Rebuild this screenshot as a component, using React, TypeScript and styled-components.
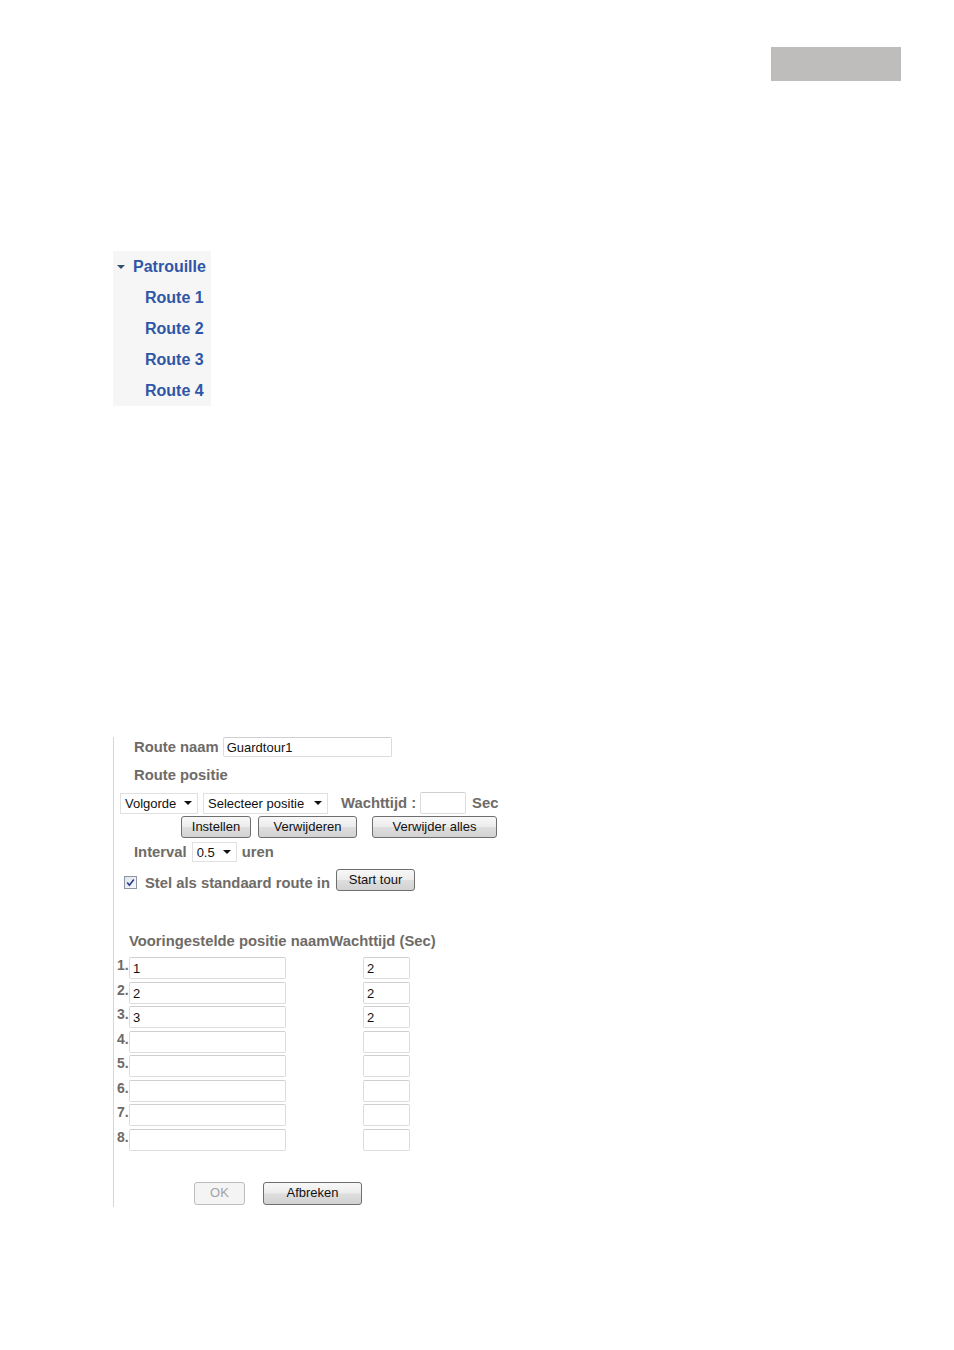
import React from 'react'
import styled, { createGlobalStyle } from 'styled-components'

const GlobalStyle = createGlobalStyle`
  body {
    margin: 0;
    background: #ffffff;
    font-family: "Liberation Sans", Arial, sans-serif;
  }
`

const Page = styled.div`
  width: 954px;
  padding-top: 47px;
`

const TopBar = styled.div`
  display: flex;
  justify-content: flex-end;
  padding-right: 53px;
`

const GrayBlock = styled.div`
  width: 130px;
  height: 34px;
  background: #bfbdbb;
`

const Tree = styled.div`
  margin: 170px 0 0 113px;
  width: 98px;
  background: #f6f6f6;
`

const TreeRow = styled.div<{ indent: number }>`
  height: 31px;
  display: flex;
  align-items: center;
  padding-left: ${p => p.indent}px;
  font-size: 16px;
  font-weight: bold;
  color: #2f56a6;
`

const Caret = styled.span<{ color?: string; size?: number }>`
  display: inline-block;
  width: 0;
  height: 0;
  border-left: ${p => p.size ?? 4}px solid transparent;
  border-right: ${p => p.size ?? 4}px solid transparent;
  border-top: ${p => p.size ?? 4}px solid ${p => p.color ?? '#111'};
`

const TreeCaret = styled(Caret)`
  margin-right: 8px;
`

const Form = styled.div`
  margin: 331px 0 0 113px;
  width: 420px;
  border-left: 1px solid #d6d6d6;
  padding-bottom: 2px;
`

const Row = styled.div<{ pad: number; mt?: number; h: number }>`
  display: flex;
  align-items: center;
  padding-left: ${p => p.pad}px;
  margin-top: ${p => p.mt ?? 0}px;
  height: ${p => p.h}px;
`

const Label = styled.span<{ ml?: number; mr?: number; low?: boolean }>`
  font-size: 14.8px;
  font-weight: bold;
  color: #6e6b68;
  white-space: nowrap;
  margin: ${p => (p.low ? 5 : 0)}px ${p => p.mr ?? 0}px 0 ${p => p.ml ?? 0}px;
`

const TextBox = styled.input<{ w: number; h?: number }>`
  box-sizing: border-box;
  width: ${p => p.w}px;
  height: ${p => p.h ?? 22}px;
  margin: 0;
  padding: 1px 3px 0;
  border: 1px solid #dcdcdc;
  border-top-color: #cfcfcf;
  border-radius: 2px;
  background: #fff;
  font-family: "Liberation Sans", Arial, sans-serif;
  font-size: 13px;
  color: #111;
  outline: none;
`

const FakeSelect = styled.div<{ w: number; h?: number; ml?: number }>`
  box-sizing: border-box;
  width: ${p => p.w}px;
  height: ${p => p.h ?? 21}px;
  margin-left: ${p => p.ml ?? 0}px;
  display: inline-flex;
  align-items: center;
  justify-content: space-between;
  padding: 0 5px 0 4px;
  border: 1px solid #e0e0e0;
  background: #fff;
  font-size: 13px;
  color: #111;
  white-space: nowrap;
`

const Button = styled.button<{ w: number; h?: number; ml?: number; disabled?: boolean }>`
  box-sizing: border-box;
  width: ${p => p.w}px;
  height: ${p => p.h ?? 22}px;
  margin: 0 0 0 ${p => p.ml ?? 0}px;
  padding: 0 0 1px;
  border: 1px solid ${p => (p.disabled ? '#bdbdbd' : '#6f6f6f')};
  border-radius: 3px;
  background: ${p =>
    p.disabled
      ? '#f4f4f4'
      : 'linear-gradient(#f8f8f8 0%, #ececec 48%, #dedede 52%, #d2d2d2 100%)'};
  font-family: "Liberation Sans", Arial, sans-serif;
  font-size: 13px;
  color: ${p => (p.disabled ? '#a3a3a3' : '#111')};
  line-height: 1;
`

const Check = styled.svg`
  flex: none;
  margin: 5px 8px 0 0;
`

const TableRow = styled.div`
  display: flex;
  align-items: flex-start;
  height: 22px;
  margin-bottom: 2.5px;
  padding-left: 3px;
`

const Num = styled.span`
  width: 12px;
  font-size: 14px;
  font-weight: bold;
  line-height: 16px;
  color: #6e6b68;
`

const Spacer = styled.div<{ w: number }>`
  width: ${p => p.w}px;
  flex: none;
`

const TableBlock = styled.div`
  margin-top: 7px;
`

const rows = [
  { name: '1', wait: '2' },
  { name: '2', wait: '2' },
  { name: '3', wait: '2' },
  { name: '', wait: '' },
  { name: '', wait: '' },
  { name: '', wait: '' },
  { name: '', wait: '' },
  { name: '', wait: '' },
]

export default function App() {
  return (
    <Page>
      <GlobalStyle />
      <TopBar>
        <GrayBlock />
      </TopBar>

      <Tree>
        <TreeRow indent={4}>
          <TreeCaret color="#34506f" />
          Patrouille
        </TreeRow>
        {[1, 2, 3, 4].map(n => (
          <TreeRow key={n} indent={32}>
            Route {n}
          </TreeRow>
        ))}
      </Tree>

      <Form>
        <Row pad={20} h={20}>
          <Label mr={4}>Route naam</Label>
          <TextBox w={169} h={20} value="Guardtour1" readOnly />
        </Row>
        <Row pad={20} mt={8} h={20}>
          <Label>Route positie</Label>
        </Row>
        <Row pad={6} mt={7} h={22}>
          <FakeSelect w={78}>
            Volgorde <Caret />
          </FakeSelect>
          <FakeSelect w={125} ml={5}>
            Selecteer positie <Caret />
          </FakeSelect>
          <Label ml={13} mr={4}>Wachttijd :</Label>
          <TextBox w={46} value="" readOnly />
          <Label ml={6}>Sec</Label>
        </Row>
        <Row pad={67} mt={2} h={22}>
          <Button w={70}>Instellen</Button>
          <Button w={99} ml={7}>Verwijderen</Button>
          <Button w={125} ml={15}>Verwijder alles</Button>
        </Row>
        <Row pad={20} mt={4} h={20}>
          <Label mr={5}>Interval</Label>
          <FakeSelect w={45} h={20}>
            0.5 <Caret />
          </FakeSelect>
          <Label ml={5}>uren</Label>
        </Row>
        <Row pad={10} mt={7} h={22}>
          <Check width="13" height="13" viewBox="0 0 13 13">
            <defs>
              <linearGradient id="cb" x1="0" y1="0" x2="1" y2="1">
                <stop offset="0" stopColor="#dfe3ea" />
                <stop offset="1" stopColor="#f8f9fb" />
              </linearGradient>
            </defs>
            <rect x="0.5" y="0.5" width="12" height="12" fill="url(#cb)" stroke="#8c97a6" />
            <path d="M3.2 6.6 L5.4 9.2 L9.8 3.4" fill="none" stroke="#2b3d86" strokeWidth="1.6" />
          </Check>
          <Label mr={6} low>Stel als standaard route in</Label>
          <Button w={79}>Start tour</Button>
        </Row>
        <Row pad={15} mt={41} h={18}>
          <Label>Vooringestelde positie naamWachttijd (Sec)</Label>
        </Row>

        <TableBlock>
          {rows.map((r, i) => (
            <TableRow key={i}>
              <Num>{i + 1}.</Num>
              <TextBox w={157} value={r.name} readOnly />
              <Spacer w={77} />
              <TextBox w={47} value={r.wait} readOnly />
            </TableRow>
          ))}
        </TableBlock>

        <Row pad={80} mt={31} h={23}>
          <Button w={51} h={23} disabled>
            OK
          </Button>
          <Button w={99} h={23} ml={18}>
            Afbreken
          </Button>
        </Row>
      </Form>
    </Page>
  )
}
